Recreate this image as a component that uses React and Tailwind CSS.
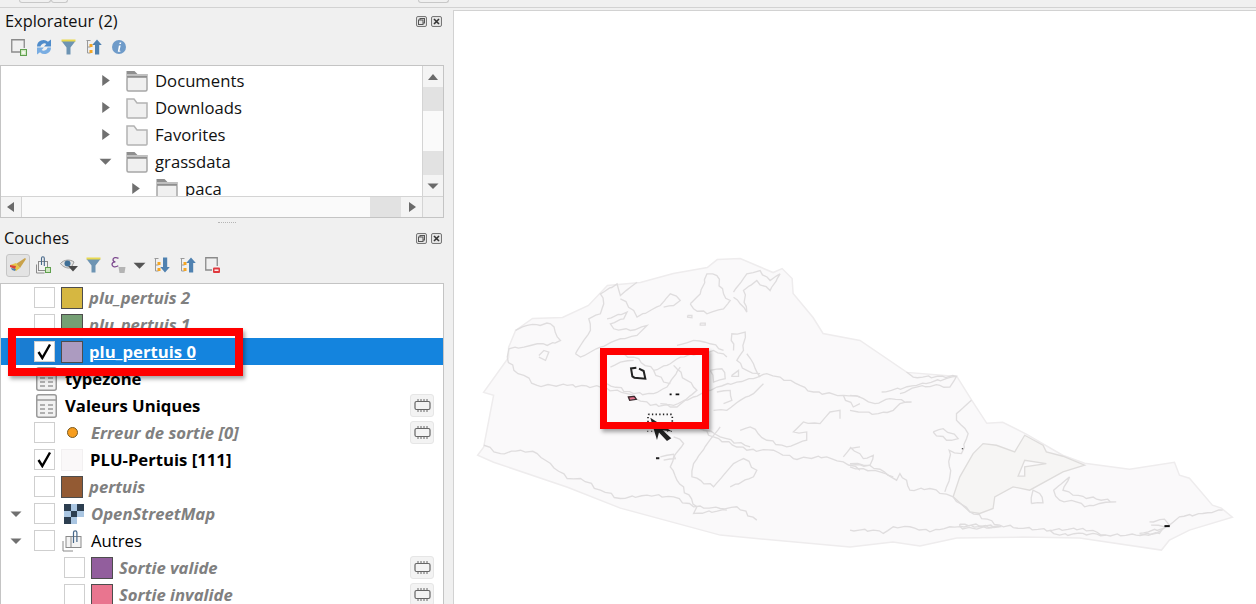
const font = { fontFamily: '"Open Sans", "Noto Sans", sans-serif' }

function Folder({ open }) {
  if (open) {
    return (
      <svg width="22" height="22" viewBox="0 0 22 22" className="shrink-0">
        <rect x="1" y="7" width="20" height="14" rx="1.5" fill="#f0f0f0" stroke="#a6a6a6" strokeWidth="1.5" />
        <path d="M0.5 1h8l3 3h10v3.5H0.5z" fill="#8f8f8f" />
        <path d="M1 5h20" stroke="#f0f0f0" strokeWidth="1" />
      </svg>
    )
  }
  return (
    <svg width="22" height="22" viewBox="0 0 22 22" className="shrink-0">
      <path d="M1 2h7l3 4h10v14a1 1 0 0 1-1 1H2a1 1 0 0 1-1-1z" fill="#f0f0f0" stroke="#b3b3b3" strokeWidth="1.5" />
    </svg>
  )
}

function Tri({ dir, color = '#707070', size = 12 }) {
  const d = {
    right: 'M3 1l7 5-7 5z',
    left: 'M9 1L2 6l7 5z',
    up: 'M1 9l5-6 5 6z',
    down: 'M0.5 3.5h11L6 9z',
  }[dir]
  return (
    <svg width={size} height={size} viewBox="0 0 12 12" className="shrink-0">
      <path d={d} fill={color} />
    </svg>
  )
}

function DockButtons() {
  return (
    <div className="flex items-center gap-[4px]">
      <svg width="11" height="11" viewBox="0 0 11 11">
        <rect x="0.5" y="0.5" width="10" height="10" rx="1.5" fill="#e4e4e4" stroke="#777" />
        <rect x="4" y="2.5" width="4.5" height="4.5" fill="none" stroke="#555" />
        <rect x="2.5" y="4" width="4.5" height="4.5" fill="#e4e4e4" stroke="#555" />
      </svg>
      <svg width="11" height="11" viewBox="0 0 11 11">
        <rect x="0.5" y="0.5" width="10" height="10" rx="1.5" fill="#e4e4e4" stroke="#777" />
        <path d="M3 3l5 5M8 3l-5 5" stroke="#333" strokeWidth="1.6" />
      </svg>
    </div>
  )
}

function IconAdd() {
  return (
    <svg width="16" height="17" viewBox="0 0 16 17">
      <path d="M9 13H0.75V0.75H13.25V9" fill="none" stroke="#8a8a8a" strokeWidth="1.3" />
      <rect x="9.5" y="10.5" width="6" height="6" fill="#cfe6c0" stroke="#5fa04e" />
      <circle cx="12.5" cy="13.5" r="1.6" fill="#f4f9ef" />
    </svg>
  )
}

function IconRefresh() {
  return (
    <svg width="16" height="16" viewBox="0 0 16 16">
      <path d="M1 7.5A6.5 6.5 0 0 1 12 2.8L15 0.5v7H8l2.4-2.6A4 4 0 0 0 4.4 7.5z" fill="#4f8ccb" />
      <path d="M15 8.5A6.5 6.5 0 0 1 4 13.2L1 15.5v-7h7l-2.4 2.6a4 4 0 0 0 6-2.6z" fill="#79ade2" />
    </svg>
  )
}

function IconFilter() {
  return (
    <svg width="15" height="16" viewBox="0 0 15 16">
      <path d="M0.5 2h14L9.5 8.5V15.5H5.5V8.5z" fill="#6d94b3" />
      <path d="M0.5 0.5h14v2H0.5z" fill="#e9d94f" />
    </svg>
  )
}

function IconTree({ up }) {
  return (
    <svg width="16" height="16" viewBox="0 0 16 16">
      <path d="M0.5 1.5h4M1.5 1.5V14h3M1.5 8h3" fill="none" stroke="#9a9a9a" />
      <rect x="3.5" y="5" width="3" height="3" fill="#f5a623" />
      <rect x="3.5" y="11" width="3" height="3" fill="#f5a623" />
      {up ? (
        <path d="M11 0.5l4.8 5.5H13.2v9.5h-4.2V6H6.2z" fill="#4f81b0" />
      ) : (
        <path d="M9 0.5h4.2V10h2.6L11 15.5 6.2 10H9z" fill="#4f81b0" />
      )}
    </svg>
  )
}

function IconInfo() {
  return (
    <svg width="14" height="14" viewBox="0 0 15 15">
      <circle cx="7.5" cy="7.5" r="7.5" fill="#6f9bc9" />
      <path d="M8.2 2.6h1.8l-.4 1.8H7.8zM7.4 6h1.9L8 11.6h1v1H6.2z" fill="#fff" />
    </svg>
  )
}

function IconBrush() {
  return (
    <svg width="18" height="16" viewBox="0 0 18 16">
      <path d="M7 7l9-6 1 1-6 9z" fill="#c9a24a" />
      <path d="M1 8l6-2 4 5-4 3-3-2-1-3z" fill="#e6c64b" />
      <path d="M1 8l6 1-1 3-5-2z" fill="#d9443a" />
      <path d="M2 11l5 1-1 2-3-1z" fill="#4f81b0" />
    </svg>
  )
}

function IconAddGroup() {
  return (
    <svg width="15" height="18" viewBox="0 0 15 18">
      <path d="M0.5 8.5v8.5h8" fill="none" stroke="#8a8a8a" />
      <rect x="2.5" y="5.5" width="9" height="9" fill="#f2f2f2" stroke="#8a8a8a" />
      <path d="M5.5 9V2.2a1.4 1.4 0 0 1 2.8 0V10" fill="none" stroke="#47688a" strokeWidth="1.1" />
      <rect x="9.5" y="11.5" width="5" height="5" fill="#cfe6c0" stroke="#5fa04e" />
    </svg>
  )
}

function IconEye() {
  return (
    <svg width="18" height="14" viewBox="0 0 18 14">
      <path d="M0.5 5.5C4 1.5 10 1 14 4l-3 6C7 10.5 3 9 0.5 5.5z" fill="#e4e4e4" stroke="#9a9a9a" />
      <circle cx="7.5" cy="5.5" r="3" fill="#3f6f96" />
      <path d="M8 8h10l-5 5.5z" fill="#4a4a4a" />
    </svg>
  )
}

function IconEpsilon() {
  return (
    <svg width="15" height="18" viewBox="0 0 15 18">
      <path d="M7.5 2.4C5 .8 2 1.6 2 3.8c0 1.3 1 2 2.4 2.1C2.6 6 1 6.9 1 8.6c0 2.4 3.4 3 6.3 1.2" fill="none" stroke="#7d4a8f" strokeWidth="1.3" />
      <path d="M7.5 11h7l-1 6h-5z" fill="#b4b4b4" />
    </svg>
  )
}

function IconRemove() {
  return (
    <svg width="15" height="17" viewBox="0 0 15 17">
      <path d="M7 13H0.75V0.75H12.25V9" fill="none" stroke="#8a8a8a" strokeWidth="1.3" />
      <rect x="8" y="10.5" width="7" height="5.5" rx="1" fill="#e0393e" />
      <path d="M9.5 13.2h4" stroke="#fff" strokeWidth="1.4" />
    </svg>
  )
}

function IconTable() {
  return (
    <svg width="21" height="24" viewBox="0 0 21 24">
      <rect x="0.75" y="0.75" width="19.5" height="22.5" rx="2" fill="#f2f2f2" stroke="#9a9a9a" strokeWidth="1.5" />
      <path d="M1 6h19" stroke="#9a9a9a" strokeWidth="1.5" />
      <path d="M4 11h5M12 11h5M4 15h5M12 15h5M4 19h5M12 19h5" stroke="#9a9a9a" strokeWidth="1.4" />
    </svg>
  )
}

function IconOsm() {
  return (
    <svg width="20" height="20" viewBox="0 0 20 20">
      <rect width="20" height="20" fill="#fff" />
      <path d="M0 0h7v7H0zM13 0h7v7h-7zM7 7h6v6H7zM0 13h7v7H0z" fill="#2c3e50" />
      <path d="M7 0h6v7H7zM0 7h7v6H0zM13 7h7v6h-7zM7 13h6v7H7z" fill="#aac6e2" />
      <path d="M13 13h7v7h-7z" fill="#fff" />
    </svg>
  )
}

function IconGroup() {
  return (
    <svg width="21" height="22" viewBox="0 0 21 22">
      <path d="M1 11v10h10" fill="none" stroke="#8a8a8a" />
      <rect x="4" y="6.5" width="8" height="11" fill="#f4f4f4" stroke="#8a8a8a" />
      <rect x="9" y="6.5" width="10" height="11" fill="#f4f4f4" stroke="#8a8a8a" />
      <path d="M11.5 13V2.6a1.7 1.7 0 0 1 3.4 0V12" fill="none" stroke="#47688a" strokeWidth="1.2" />
    </svg>
  )
}

function ChipButton() {
  return (
    <div className="absolute right-[9px] top-[2px] flex h-[23px] w-[24px] items-center justify-center rounded-[3px] border border-[#e6e6e6] bg-[#f3f3f3]">
      <svg width="17" height="13" viewBox="0 0 17 13">
        <rect x="1" y="2.5" width="15" height="8" rx="1.5" fill="none" stroke="#666" strokeWidth="1.2" />
        <path d="M4 0v2M7 0v2M10 0v2M13 0v2M4 11v2M7 11v2M10 11v2M13 11v2" stroke="#666" strokeWidth="1" />
      </svg>
    </div>
  )
}

function Check({ checked }) {
  return (
    <div className="flex h-[21px] w-[21px] shrink-0 items-center justify-center border border-[#cfcfcf] bg-white">
      {checked && (
        <svg width="17" height="17" viewBox="0 0 17 17">
          <path d="M2.5 9l3.8 6L14 1.5" fill="none" stroke="#000" strokeWidth="2.4" />
        </svg>
      )}
    </div>
  )
}

function Swatch({ color, border = 'border-[#4d4d4d]' }) {
  return <div className={`h-[22px] w-[22px] shrink-0 border ${border}`} style={{ backgroundColor: color }} />
}

const GRAY = 'font-bold italic text-[#808080]'
const BOLD = 'font-bold text-black'

const layers = [
  { indent: 'w-[19px]', check: false, icon: <Swatch color="#d6b741" />, text: 'plu_pertuis 2', cls: GRAY },
  { indent: 'w-[19px]', check: false, icon: <Swatch color="#759f74" />, text: 'plu_pertuis 1', cls: GRAY },
  { indent: 'w-[19px]', check: true, icon: <Swatch color="#ac9bc0" />, text: 'plu_pertuis 0', cls: 'font-bold text-white underline', selected: true },
  { indent: 'w-[35px]', icon: <IconTable />, text: 'typezone', cls: BOLD, tight: true },
  { indent: 'w-[35px]', icon: <IconTable />, text: 'Valeurs Uniques', cls: BOLD, tight: true, chip: true },
  { indent: 'w-[19px]', check: false, icon: <div className="mx-[5.5px] h-[11px] w-[11px] shrink-0 rounded-full border border-[#7a5a20] bg-[#f79d1e]" />, text: 'Erreur de sortie [0]', cls: `${GRAY} ml-[2px]`, chip: true },
  { indent: 'w-[19px]', check: true, icon: <Swatch color="#faf8f9" border="border-[#f2f0f1]" />, text: 'PLU-Pertuis [111]', cls: `${BOLD} ml-[1px]` },
  { indent: 'w-[19px]', check: false, icon: <Swatch color="#935a33" />, text: 'pertuis', cls: GRAY },
  { indent: 'w-[19px]', caret: true, check: false, icon: <div className="ml-[3px] w-[19px]"><IconOsm /></div>, text: 'OpenStreetMap', cls: `${GRAY} ml-[2px]` },
  { indent: 'w-[19px]', caret: true, check: false, icon: <div className="ml-[1px] w-[21px]"><IconGroup /></div>, text: 'Autres', cls: 'text-black ml-[2px]' },
  { indent: 'w-[49px]', check: false, icon: <Swatch color="#925e9d" />, text: 'Sortie valide', cls: GRAY, chip: true },
  { indent: 'w-[49px]', check: false, icon: <Swatch color="#e9758f" />, text: 'Sortie invalide', cls: GRAY, chip: true },
]

function LayerRow({ row }) {
  return (
    <div className={`relative flex h-[27px] items-center ${row.selected ? 'bg-[#1484de]' : ''}`}>
      <div className={`flex h-full shrink-0 items-center pl-[9px] ${row.indent}`}>
        {row.caret && <Tri dir="down" />}
      </div>
      <div className={`flex h-full items-center ${row.tight ? '' : 'gap-[6px] pl-[14px]'} ${row.selected ? 'bg-[#1a7dd2]' : ''}`}>
        {row.check !== undefined && <Check checked={row.check} />}
        {row.icon}
      </div>
      <span className={`whitespace-nowrap text-[16.7px] ${row.tight ? 'pl-[8px]' : 'pl-[6px]'} ${row.cls}`}>{row.text}</span>
      {row.chip && <ChipButton />}
    </div>
  )
}

function ExplorerRow({ indent, caret, open, name }) {
  return (
    <div className="flex h-[27px] shrink-0 items-center">
      <div className={`flex shrink-0 justify-end pr-[14px] ${indent}`}>
        <Tri dir={caret} size={13} />
      </div>
      <Folder open={open} />
      <span className="ml-[7px] text-[16.7px] text-[#111]">{name}</span>
    </div>
  )
}

function ScrollBtn({ dir, cls }) {
  return (
    <div className={`flex shrink-0 items-center justify-center bg-[#f4f4f4] ${cls}`}>
      <Tri dir={dir} size={12} color="#6a6a6a" />
    </div>
  )
}

function ToolSlot({ children, cls = 'w-[25px]' }) {
  return <div className={`flex shrink-0 items-center justify-center ${cls}`}>{children}</div>
}

function ExplorerPanel() {
  return (
    <div className="flex flex-col">
      <div className="flex h-[26px] items-center justify-between pl-[5px] pr-[11px]">
        <span className="text-[16.4px] text-[#111]">Explorateur (2)</span>
        <DockButtons />
      </div>
      <div className="mb-[5px] flex h-[26px] items-center pl-[6px]">
        <ToolSlot><IconAdd /></ToolSlot>
        <ToolSlot><IconRefresh /></ToolSlot>
        <ToolSlot><IconFilter /></ToolSlot>
        <ToolSlot><IconTree up /></ToolSlot>
        <ToolSlot><IconInfo /></ToolSlot>
      </div>
      <div className="mr-[9px] flex h-[153px] flex-col border border-[#c4c4c4] bg-white">
        <div className="flex min-h-0 flex-1">
          <div className="flex flex-1 flex-col overflow-hidden pt-[1px]">
            <ExplorerRow indent="w-[125px]" caret="right" open name="Documents" />
            <ExplorerRow indent="w-[125px]" caret="right" name="Downloads" />
            <ExplorerRow indent="w-[125px]" caret="right" name="Favorites" />
            <ExplorerRow indent="w-[125px]" caret="down" open name="grassdata" />
            <ExplorerRow indent="w-[155px]" caret="right" open name="paca" />
          </div>
          <div className="flex w-[21px] shrink-0 flex-col border-l border-[#d4d4d4]">
            <ScrollBtn dir="up" cls="h-[21px]" />
            <div className="h-[24px] shrink-0 bg-[#e2e2e2]" />
            <div className="h-[40px] shrink-0 bg-[#fafafa]" />
            <div className="h-[24px] shrink-0 bg-[#e2e2e2]" />
            <div className="min-h-0 flex-1 bg-[#fafafa]" />
            <ScrollBtn dir="down" cls="h-[21px]" />
          </div>
        </div>
        <div className="flex h-[21px] shrink-0 border-t border-[#d4d4d4]">
          <ScrollBtn dir="left" cls="w-[21px] border-r border-[#d4d4d4]" />
          <div className="flex-1 bg-[#fafafa]" />
          <div className="w-[31px] bg-[#e2e2e2]" />
          <ScrollBtn dir="right" cls="w-[21px]" />
          <div className="w-[21px] border-l border-[#d4d4d4] bg-[#f0f0f0]" />
        </div>
      </div>
    </div>
  )
}

function LayersPanel() {
  return (
    <div className="flex min-h-0 flex-1 flex-col">
      <div className="flex h-[6px] items-start justify-center pt-[4px]">
        <div className="h-[1px] w-[18px] border-t border-dotted border-[#b5b5b5]" />
      </div>
      <div className="flex h-[28px] items-center justify-between pl-[4px] pr-[11px]">
        <span className="text-[16.4px] text-[#111]">Couches</span>
        <DockButtons />
      </div>
      <div className="mb-[5px] flex h-[26px] items-center pl-[6px]">
        <div className="flex h-[23px] w-[24px] shrink-0 items-center justify-center rounded-[3px] border border-[#c6c6c6] bg-[#e3e3e3]">
          <IconBrush />
        </div>
        <div className="ml-[1px] flex items-center">
          <ToolSlot><IconAddGroup /></ToolSlot>
          <ToolSlot><IconEye /></ToolSlot>
          <ToolSlot><IconFilter /></ToolSlot>
          <ToolSlot><IconEpsilon /></ToolSlot>
          <ToolSlot cls="w-[17px]"><Tri dir="down" color="#555" size={13} /></ToolSlot>
          <ToolSlot cls="w-[27px]"><IconTree /></ToolSlot>
          <ToolSlot><IconTree up /></ToolSlot>
          <ToolSlot><IconRemove /></ToolSlot>
        </div>
      </div>
      <div className="mr-[9px] min-h-0 flex-1 overflow-hidden border border-b-0 border-[#c4c4c4] bg-white">
        {layers.map((row) => (
          <LayerRow key={row.text} row={row} />
        ))}
      </div>
    </div>
  )
}

// map lines traced from the reference, in 3x crop coordinates
const INNER_A = [
  '70,585 120,610 180,600 230,610 270,640 320,685 360,685 420,720 480,745 560,735 640,740 700,770 780,775 830,770 890,810',
  '140,320 160,360 190,375 230,405 320,405 420,410 500,430 570,465 640,465 700,440 770,410 830,395 880,385 920,370 960,380 1020,405 1060,425 1150,435 1200,440',
  '165,240 200,225 270,220 300,270 260,285 230,280 190,290 145,295 140,320',
  '235,315 250,300 265,305 255,330 235,320',
  '345,310 370,270 390,240 385,205 420,190 430,160 420,130 470,100 480,135 510,110 530,95',
  '345,310 360,320 420,290 480,265 530,255 560,225 510,240 460,235 450,220 490,205 500,185 440,205',
  '480,145 520,180 530,200 600,165 630,130 660,150 640,165 610,170',
  '690,160 720,130 740,70 770,75 790,130 810,150 790,175 740,190 700,175 690,160',
  '820,125 860,70 900,60 930,90 960,70 930,120 890,90 850,120 860,185 840,160 820,140',
  '420,300 520,320 580,360 620,345 660,320 760,300 800,320',
  '820,300 815,250 855,245 850,300 830,330 860,360 900,370',
  '440,400 520,430 580,430 620,410 660,350',
  '640,345 680,390 710,420 650,470 600,460',
  '450,350 480,335 520,330',
  '580,360 610,395 630,400',
  '650,285 700,270 750,280 790,300',
  '750,360 785,355 795,385 760,395 750,360',
  '815,375 835,360 835,378 815,378 815,375',
  '682,195 695,195 695,202 682,200 682,195',
  '720,218 735,218 735,224 720,224 720,218',
  '780,530 745,575 700,640 695,680 760,710 790,675 820,640 850,625 890,660 880,680 810,710',
  '640,560 670,580 640,620 630,650 650,690 710,770 700,790 800,780',
  '700,520 760,560 860,600 940,600 1000,625 1100,620 1150,635 1200,660',
  '720,530 780,560 870,590',
  '840,540 870,530 920,570 980,590 1040,570 1040,545 1000,545 1030,515 1080,520 1110,485 1140,480 1140,505',
  '1150,435 1180,470 1200,460',
  '760,480 800,480 840,450 880,430 910,400',
  '770,425 810,420 815,450 790,460',
  '860,310 880,340 900,380',
  '600,620 620,615 640,612 645,625 610,630',
  '1150,620 1170,595 1200,590',
]

const INNER_B = [
  '0,290 40,295 90,305 140,330 150,310 170,330 180,360 240,355 290,372 310,380 360,425 450,465 520,475 610,480 700,475 770,495 860,495 920,490 960,465 990,440 1060,430 1120,420',
  '0,280 40,285 90,297 130,320',
  '285,365 300,320 298,240 335,250 355,190 320,150 320,130 365,90',
  '250,185 280,175 325,205 290,210 250,185',
  '545,400 550,360 570,370 580,398 545,400',
  '660,320 640,360 670,375 800,395 750,400 705,410 680,395 630,390 612,360 660,320',
  '600,480 630,495 700,490 770,495',
  '330,462 450,470 330,468 330,462',
  '0,480 70,480 100,490 130,470 180,470 240,485 300,470 370,475 455,470',
  '0,75 40,85 75,100 120,85 185,95 150,100 130,120 85,130 25,125 0,120',
  '95,65 200,45 320,18 300,50 270,45 200,50 150,70',
  '170,5 190,20 320,18',
  '900,455 945,447 960,465 945,470 905,465',
  '870,490 940,475 930,490 870,495',
  '0,230 40,265 70,255 60,285 0,285',
]

// the boundaries are wiggly, so break each long segment up a little
function wiggle(points) {
  const pts = points.split(' ').map((p) => p.split(',').map(Number))
  const out = [pts[0]]
  for (let i = 1; i < pts.length; i++) {
    const [x0, y0] = pts[i - 1]
    const [x1, y1] = pts[i]
    const len = Math.hypot(x1 - x0, y1 - y0)
    const steps = Math.floor(len / 14)
    for (let s = 1; s < steps; s++) {
      const t = s / steps
      const off = Math.sin((x0 + y1) * 0.37 + s * 2.3) * 3.5
      out.push([x0 + (x1 - x0) * t + off, y0 + (y1 - y0) * t - off])
    }
    out.push(pts[i])
  }
  return out.map((p) => p.join(',')).join(' ')
}

function MapView() {
  return (
    <svg viewBox="454 10 802 594" className="h-full w-full">
      <polygon
        points="477,455 483,447 493,395 483,392 508,357 508,347 515,330 532,318 562,317 588,305 607,285 640,282 673,273 707,267 717,259 740,258 773,272 782,268 792,278 793,293 813,317 823,333 860,340 907,372 957,376 972,400 987,423 1003,422 1027,434 1063,455 1085,463 1130,469 1175,462 1180,475 1190,478 1213,505 1222,508 1233,517 1190,530 1170,540 1162,550 1080,538 1023,537 957,538 920,546 893,542 850,547 720,535 620,508 567,487 493,462"
        fill="#faf9fa"
        stroke="#eeeced"
        strokeWidth="1.5"
      />
      <g transform="translate(460 250) scale(0.3333)" fill="none" stroke="#dfddde" strokeWidth="4">
        {INNER_A.map((p) => (
          <polyline key={p} points={wiggle(p)} />
        ))}
        <path d="M528 352L512 354 516 378 522 382 555 385 550 362 536 355" stroke="#222" strokeWidth="6" />
        <polygon points="504,440 522,438 528,447 508,450" stroke="#3a2a2e" strokeWidth="4" fill="#e9758f" />
        <path d="M628 432h6M646 432h11" stroke="#111" strokeWidth="5" />
        <path d="M563 515V495q0-3 3-3H632q4 0 4 4V515" stroke="#222" strokeWidth="5" strokeDasharray="4 7" />
        <path d="M560 543H635" stroke="#444" strokeWidth="3" strokeDasharray="4 8" />
        <rect x="587" y="621" width="10" height="6" fill="#222" stroke="none" />
        <path d="M570 502l65 42-28-4 26 24-13 8-24-25-6 22z" fill="#222" stroke="none" />
      </g>
      <g transform="translate(850 370) scale(0.3333)">
        <polygon
          points="310,380 330,320 370,250 400,220 440,225 495,245 525,195 580,225 590,245 640,258 705,285 640,305 540,360 490,350 435,380 430,415 390,430 360,425"
          fill="#f6f5f4"
          stroke="#dedcdb"
          strokeWidth="4"
        />
        <polygon points="505,318 525,270 590,280 525,290 525,318" fill="#faf9fa" stroke="#dedcdb" strokeWidth="4" />
        <g fill="none" stroke="#dfddde" strokeWidth="4">
          {INNER_B.map((p) => (
            <polyline key={p} points={wiggle(p)} />
          ))}
        </g>
        <rect x="945" y="465" width="16" height="6" fill="#111" />
        <rect x="336" y="234" width="4" height="3" fill="#222" />
      </g>
    </svg>
  )
}

export default function App() {
  return (
    <div className="relative flex h-[604px] w-[1256px] flex-col overflow-hidden bg-[#f0f0f0]" style={font}>
      <div className="flex h-[8px] shrink-0 items-start border-b border-[#d2d2d2] pl-[19px] pr-[807px]">
        <div className="h-[3px] w-[32px] rounded-b-[3px] border border-t-0 border-[#c8c8c8]" />
        <div className="h-[3px] w-[17px] rounded-b-[3px] border border-t-0 border-[#c8c8c8]" />
        <div className="ml-auto h-[3px] w-[31px] rounded-b-[3px] border border-t-0 border-[#c8c8c8]" />
      </div>
      <div className="flex min-h-0 flex-1">
        <div className="flex w-[453px] shrink-0 flex-col">
          <ExplorerPanel />
          <LayersPanel />
        </div>
        <div className="mt-[2px] min-w-0 flex-1 border-l border-t border-[#d2d2d2] bg-white">
          <MapView />
        </div>
      </div>

      {/* red callouts drawn over the screenshot */}
      <div className="absolute left-[8px] top-[328px] h-[48px] w-[235px] border-[8px] border-[#ff0000] shadow-[2px_3px_4px_rgba(0,0,0,0.35)]" />
      <div className="absolute left-[600px] top-[348px] h-[81px] w-[109px] border-[7px] border-[#ff0000] shadow-[2px_3px_4px_rgba(0,0,0,0.35)]" />
    </div>
  )
}
